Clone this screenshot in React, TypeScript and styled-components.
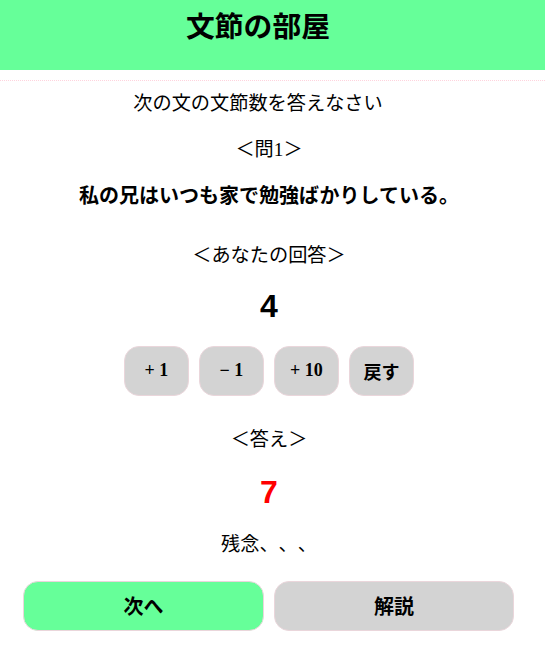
import React from "react";
import styled, { createGlobalStyle } from "styled-components";

const GlobalStyle = createGlobalStyle`
  html, body {
    margin: 0;
    padding: 0;
    background: #ffffff;
  }
  body {
    font-family: "Liberation Serif", "Noto Sans CJK JP", serif;
    color: #000000;
    text-spacing-trim: space-all;
  }
`;

const Page = styled.div`
  width: 545px;
  min-height: 659px;
  display: flex;
  flex-direction: column;
`;

const Header = styled.header`
  height: 70px;
  box-sizing: border-box;
  padding-top: 8px;
  background: #66ff99;
  display: flex;
  justify-content: center;
  align-items: flex-start;
`;

const Title = styled.h1`
  margin: 0;
  padding-right: 29px;
  font-family: "Noto Sans CJK JP", sans-serif;
  font-size: 28.8px;
  font-weight: 700;
  line-height: 1.2;
`;

const Divider = styled.div`
  margin-top: 10px;
  height: 0;
  border-top: 1px dotted #ffd3dd;
`;

const Main = styled.main`
  display: flex;
  flex-direction: column;
  align-items: center;
  padding-right: 7px;
`;

const Line = styled.p<{ $mt: number; $shift?: number }>`
  margin: ${(p) => p.$mt}px 0 0;
  padding-right: ${(p) => p.$shift ?? 0}px;
  font-size: 19.2px;
  line-height: 31.2px;
  text-align: center;
  text-spacing-trim: space-all;
`;

const Sentence = styled(Line)`
  font-family: "Noto Sans CJK JP", sans-serif;
  font-weight: 700;
  font-size: 20px;
`;

const BigNumber = styled.div<{ $mt: number; $color: string }>`
  margin-top: ${(p) => p.$mt}px;
  font-family: "Liberation Sans", Arial, sans-serif;
  font-weight: 700;
  font-size: 32px;
  line-height: 38.4px;
  color: ${(p) => p.$color};
`;

const ButtonRow = styled.div`
  margin-top: 19.8px;
  display: flex;
  gap: 10px;
`;

const SmallButton = styled.button`
  width: 65px;
  height: 50px;
  box-sizing: border-box;
  border: 1px solid #ead6db;
  border-radius: 15px;
  background: #d3d3d3;
  font-family: "Liberation Serif", "Noto Sans CJK JP", serif;
  font-weight: 700;
  font-size: 18px;
  color: #000000;
  padding: 0;
  cursor: pointer;
`;

const BottomRow = styled.div`
  margin-top: 20.4px;
  display: grid;
  grid-template-columns: 241px 240px;
  gap: 10px;
  padding-left: 23px;
`;

const BigButton = styled.button<{ $bg: string }>`
  height: 50px;
  box-sizing: border-box;
  border: 1px solid #ead6db;
  border-radius: 15px;
  background: ${(p) => p.$bg};
  font-family: "Noto Sans CJK JP", sans-serif;
  font-weight: 700;
  font-size: 20px;
  color: #000000;
  cursor: pointer;
`;

export default function App() {
  const controls = ["+ 1", "− 1", "+ 10", "戻す"];
  return (
    <>
      <GlobalStyle />
      <Page>
        <Header>
          <Title>文節の部屋</Title>
        </Header>
        <Divider />
        <Main>
          <Line $mt={7} $shift={22}>次の文の文節数を答えなさい</Line>
          <Line $mt={14.8}>＜問1＞</Line>
          <Sentence $mt={13.8} $shift={0}>私の兄はいつも家で勉強ばかりしている。</Sentence>
          <Line $mt={29.8}>＜あなたの回答＞</Line>
          <BigNumber $mt={16.2} $color="#000000">4</BigNumber>
          <ButtonRow>
            {controls.map((c) => (
              <SmallButton key={c}>{c}</SmallButton>
            ))}
          </ButtonRow>
          <Line $mt={28.4}>＜答え＞</Line>
          <BigNumber $mt={18.2} $color="#ff0000">7</BigNumber>
          <Line $mt={17.2}>残念、、、</Line>
        </Main>
        <BottomRow>
          <BigButton $bg="#66ff99">次へ</BigButton>
          <BigButton $bg="#d3d3d3">解説</BigButton>
        </BottomRow>
      </Page>
    </>
  );
}
